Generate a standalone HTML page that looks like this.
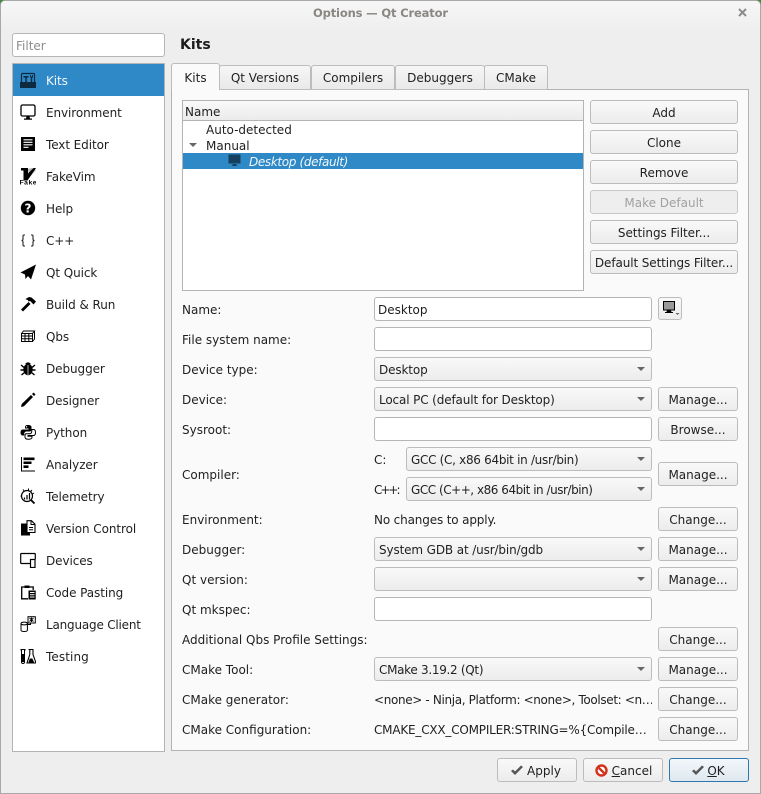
<!DOCTYPE html>
<html><head><meta charset="utf-8"><title>Options — Qt Creator</title>
<style>
html,body{margin:0;padding:0;background:#3a8a3a;}
body{width:761px;height:794px;overflow:hidden;position:relative;font:12px/16px "DejaVu Sans",sans-serif;color:#1f1f1f;}
#w{position:absolute;left:0;top:0;width:759px;height:792px;border:1px solid #a8a8a8;border-radius:5px 5px 0 0;background:#eeeeee;overflow:hidden;}
.a{position:absolute;white-space:nowrap;}
#root{position:absolute;left:0;top:0;width:761px;height:794px;}
.t{position:absolute;white-space:nowrap;line-height:16px;margin-top:1px;}
.b{position:absolute;box-sizing:border-box;height:24px;border:1px solid #bcbcbc;border-radius:3px;background:linear-gradient(#f9f9f9,#ececec);text-align:center;line-height:24px;white-space:nowrap;}
.i{position:absolute;box-sizing:border-box;height:24px;border:1px solid #b6b6b6;border-radius:3px;background:#fff;line-height:24px;padding-left:3px;white-space:nowrap;}
.c{position:absolute;box-sizing:border-box;height:24px;border:1px solid #bcbcbc;border-radius:3px;background:linear-gradient(#f9f9f9,#ececec);line-height:24px;padding-left:4px;white-space:nowrap;letter-spacing:-.13px;}
.c:after{content:"";position:absolute;right:6px;top:9px;border-left:4px solid transparent;border-right:4px solid transparent;border-top:4px solid #666;}
.tab{position:absolute;box-sizing:border-box;top:65px;height:25px;border:1px solid #bcbcbc;border-radius:3px 3px 0 0;background:linear-gradient(#f6f6f6,#e9e9e9);text-align:center;line-height:25px;white-space:nowrap;}
.s{position:absolute;left:20px;width:16px;height:16px;}
.n{position:absolute;left:46px;white-space:nowrap;line-height:16px;margin-top:1px;letter-spacing:-.08px;}
</style></head><body>
<div id="w"></div>
<div id="root">
<div style="position:absolute;left:1px;top:1px;width:759px;height:30px;background:linear-gradient(#f7f7f7,#eeeeee);border-radius:4px 4px 0 0"></div>
<div class="t" style="left:313px;top:4px;color:#8a8682;font-weight:bold;font-size:11.5px;letter-spacing:-.15px">Options — Qt Creator</div>
<svg class="a" style="left:738px;top:8px" width="9" height="9"><path d="M1 1L8 8M8 1L1 8" stroke="#8c8c8c" stroke-width="2"/></svg>

<div class="i" style="left:12px;top:33px;width:153px;color:#8d8d8d;border-radius:3px">Filter</div>

<div style="position:absolute;box-sizing:border-box;left:12px;top:63px;width:153px;height:689px;background:#fff;border:1px solid #b4b4b4"></div>
<div style="position:absolute;left:13px;top:64px;width:151px;height:32px;background:#2e89c6"></div>
<div class="n" style="top:72px;color:#f2f7fb">Kits</div>
<div class="n" style="top:104px">Environment</div>
<div class="n" style="top:136px">Text Editor</div>
<div class="n" style="top:168px">FakeVim</div>
<div class="n" style="top:200px">Help</div>
<div class="n" style="top:232px">C++</div>
<div class="n" style="top:264px">Qt Quick</div>
<div class="n" style="top:296px">Build &amp; Run</div>
<div class="n" style="top:328px">Qbs</div>
<div class="n" style="top:360px">Debugger</div>
<div class="n" style="top:392px">Designer</div>
<div class="n" style="top:424px">Python</div>
<div class="n" style="top:456px">Analyzer</div>
<div class="n" style="top:488px">Telemetry</div>
<div class="n" style="top:520px">Version Control</div>
<div class="n" style="top:552px">Devices</div>
<div class="n" style="top:584px">Code Pasting</div>
<div class="n" style="top:616px;letter-spacing:-.2px">Language Client</div>
<div class="n" style="top:648px;letter-spacing:.1px">Testing</div>

<!-- kits -->
<svg class="s" style="top:72px" viewBox="0 0 16 16"><path d="M0 10h16v6H0z" fill="#0e2a40"/><path d="M1.500 10V2.500q0-1 1-1h11q1 0 1 1V10" fill="none" stroke="#0e2a40" stroke-width="1.200"/><path d="M3.500 4h5v1.600H6.800V10H5.300V5.600H3.500zM10 3v2.500h.8V10h1.400V5.500h.8V3h-.9v1.500h-1.200V3z" fill="#0e2a40"/></svg>
<!-- env -->
<svg class="s" style="top:104px" viewBox="0 0 16 16"><rect x="1" y="1" width="14" height="11" rx="1.500" fill="#fff" stroke="#000" stroke-width="1.300"/><path d="M6.500 12.500h3l.5 2h2v1.200H4v-1.200h2z" fill="#000"/></svg>
<!-- text editor -->
<svg class="s" style="top:136px" viewBox="0 0 16 16"><rect x="1" y="1" width="14" height="14" fill="#000"/><path d="M3.500 3.800h9M3.500 6.300h9M3.500 8.800h9M3.500 11.300h5" stroke="#fff" stroke-width="1.200"/></svg>
<!-- fakevim -->
<svg class="s" style="top:168px;height:17px" viewBox="0 0 16 17"><path d="M8 1l4-1 4 2-7 8z" fill="#b5b5b5"/><path d="M1 0h7v5.500L13.500 0H16L7.500 12.500H3.500V2.500H1z" fill="#000"/><text x="-.5" y="16.500" font-family="Liberation Sans" font-weight="bold" font-size="6.800" textLength="17" fill="#000">Fake</text></svg>
<!-- help -->
<svg class="s" style="top:200px" viewBox="0 0 16 16"><circle cx="8" cy="8" r="7.200" fill="#000"/><text x="8" y="12.400" text-anchor="middle" font-family="DejaVu Sans" font-weight="bold" font-size="12" fill="#fff">?</text></svg>
<!-- cpp -->
<svg class="s" style="top:232px" viewBox="0 0 16 16"><path d="M5 3H4Q3 3 3 4V7Q3 8.500 1.500 8.500 3 8.500 3 10V13Q3 14 4 14H5M11 3H12Q13 3 13 4V7Q13 8.500 14.500 8.500 13 8.500 13 10V13Q13 14 12 14H11" fill="none" stroke="#222" stroke-width="1.100"/></svg>
<!-- qt quick -->
<svg class="s" style="top:264px" viewBox="0 0 16 16"><path d="M16 .5L.5 8.500l4.500 2 .5 4.500 2.500-3 3 3.500z" fill="#000"/></svg>
<!-- hammer -->
<svg class="s" style="top:296px" viewBox="0 0 16 16"><path d="M1 13.500l2 2 7.500-7.500-2-2z" fill="#000"/><path d="M5.500 3L9 1l2.500.5 4.500 4-2.500 3-3.300-3.500-1.500.5-1-1.500-1.500-.5z" fill="#000"/></svg>
<!-- qbs -->
<svg class="s" style="top:328px" viewBox="0 0 16 16"><path d="M1.500 5.500h11v8h-11zM1.500 8h11M1.500 10.800h11M5 5.500v8M8.800 5.500v8M1.500 5.500l2-2.500h11l-2 2.500M14.500 3v8l-2 2.500" fill="none" stroke="#000" stroke-width="1"/></svg>
<!-- bug -->
<svg class="s" style="top:360px" viewBox="0 0 16 16"><ellipse cx="8" cy="9.500" rx="4.700" ry="5.700" fill="#000"/><path d="M5 4Q8 .5 11 4z" fill="#000"/><path d="M1 5l3 2.500M15 5l-3 2.500M.5 10h3M15.500 10h-3M1.500 15l3-2.500M14.500 15l-3-2.500" stroke="#000" stroke-width="1.400"/><path d="M8 5v10" stroke="#fff" stroke-width=".7"/></svg>
<!-- designer -->
<svg class="s" style="top:392px" viewBox="0 0 16 16"><path d="M1 15l.7-3L11 3l2 2-9 9.300z" fill="#000"/><path d="M12 2l1.500-1.500 2 2L14 4z" fill="#000"/></svg>
<!-- python -->
<svg class="s" style="top:424px" viewBox="0 0 16 16"><path d="M8 1C5.500 1 5 2 5 3v1.500h3.500v1H3C1.500 5.500.5 6.500.5 8.500s1 3 2.500 3h1.200V10c0-1.500 1-2.500 2.500-2.500h3c1 0 1.800-.8 1.800-1.800V3c0-1.200-1.200-2-3.500-2z" fill="#000"/><path d="M11.800 5.500V7c0 1.800-1 2.800-2.500 2.800h-3c-.8 0-1.300.5-1.300 1.300V13c0 1.500 1.500 2.300 3.500 2.300s3.500-.8 3.500-2v-1H8v-.8h5.500c1.200 0 2-1 2-3s-.8-3-2-3z" fill="#fff" stroke="#000" stroke-width="1"/><circle cx="6.500" cy="2.800" r=".7" fill="#fff"/></svg>
<!-- analyzer -->
<svg class="s" style="top:456px" viewBox="0 0 16 16"><path d="M1.500 1v14H15" fill="none" stroke="#000" stroke-width="1"/><path d="M3.500 1.500h11v2.600h-11zM3.500 5.500h8v2.500h-8zM3.500 9.400h5V12h-5z" fill="#000"/></svg>
<!-- telemetry -->
<svg class="s" style="top:488px" viewBox="0 0 16 16"><circle cx="7" cy="8" r="5.500" fill="#fff" stroke="#000" stroke-width="1.200"/><path d="M4.500 9.500v2M7 7v4.500M9.500 5v6.500" stroke="#000" stroke-width="1.200"/><path d="M11 12l3.500 3.500" stroke="#000" stroke-width="1.800"/><path d="M3 1.500l1.500 2M8.500.5v2M12 2l-1.500 1.700M.5 8h1M14 5l-1.500 1" stroke="#000" stroke-width="1"/></svg>
<!-- vc -->
<svg class="s" style="top:520px" viewBox="0 0 16 16"><path d="M1 3.500h6l3 3V15.500H1z" fill="#000"/><path d="M7 .7h4.500L15 4.200v8.300H7z" fill="#fff" stroke="#000" stroke-width="1.100"/><path d="M11 1v3.500h4" fill="none" stroke="#000"/><path d="M9 7.500h4M9 9.800h4" stroke="#000"/></svg>
<!-- devices -->
<svg class="s" style="top:552px" viewBox="0 0 16 16"><path d="M10 11.500H1.500q-.8 0-.8-.8V2.300q0-.8.8-.8h13q.8 0 .8.8v5" fill="none" stroke="#000" stroke-width="1.200"/><rect x="10.500" y="7.500" width="4.500" height="8" fill="#fff" stroke="#000" stroke-width="1.200"/></svg>
<!-- code pasting -->
<svg class="s" style="top:584px" viewBox="0 0 16 16"><path d="M8 14.800H1.700V3h11.500V6" fill="none" stroke="#000" stroke-width="1.300"/><path d="M4.500 1.500h5V4h-5z" fill="#000"/><path d="M8.500 6.500h7.200v9H8.500z" fill="#000"/><path d="M10 8.500h4.500M10 10.800h4.500M10 13h4.500" stroke="#fff" stroke-width="1"/></svg>
<!-- lang client -->
<svg class="s" style="top:616px" viewBox="0 0 16 16"><path d="M1 7.500V14q0 1.500 3.200 1.500T7.400 14V7.500" fill="#fff" stroke="#000"/><ellipse cx="4.200" cy="7.500" rx="3.200" ry="1.400" fill="#fff" stroke="#000"/><rect x="8" y=".7" width="7.300" height="6.300" fill="#fff" stroke="#000"/><path d="M9.500 5.500l4-3.500M9.500 2l4 3.500M11.500 1.500V6" stroke="#000" stroke-width="1"/><path d="M7.500 8.500h3V7" fill="none" stroke="#000"/></svg>
<!-- testing -->
<svg class="s" style="top:648px" viewBox="0 0 16 16"><path d="M.5 1h5v1.600H.5z" fill="#000"/><path d="M1.500 2v12q0 1.500 1.500 1.500T4.500 14V2" fill="#fff" stroke="#000"/><path d="M2 6h2.500v8H2z" fill="#000"/><path d="M8.500 1.500h5M9.800 1.500v5L7 15h9l-3-8.500v-5" fill="none" stroke="#000" stroke-width="1.100"/><path d="M8.300 15l1.500-4.500h2.500L14.500 15z" fill="#000"/></svg>

<div class="t" style="left:180px;top:36px;font-size:14px;font-weight:bold;color:#1c1c1c">Kits</div>

<!-- pane -->
<div style="position:absolute;box-sizing:border-box;left:171px;top:89px;width:578px;height:662px;background:#fafafa;border:1px solid #b4b4b4"></div>
<div class="tab" style="left:219px;width:92px">Qt Versions</div>
<div class="tab" style="left:311px;width:84px">Compilers</div>
<div class="tab" style="left:395px;width:90px">Debuggers</div>
<div class="tab" style="left:484px;width:64px">CMake</div>
<div style="position:absolute;box-sizing:border-box;left:171px;top:63px;width:49px;height:27px;border:1px solid #bcbcbc;border-bottom:0;border-radius:3px 3px 0 0;background:#fafafa;text-align:center;line-height:28px">Kits</div>

<!-- tree -->
<div style="position:absolute;box-sizing:border-box;left:182px;top:100px;width:402px;height:191px;background:#fff;border:1px solid #b4b4b4"></div>
<div style="position:absolute;box-sizing:border-box;left:183px;top:101px;width:400px;height:20px;background:linear-gradient(#f9f9f9,#ebebeb);border-bottom:1px solid #b4b4b4;line-height:22px;padding-left:2px">Name</div>
<div class="t" style="left:206px;top:121px">Auto-detected</div>
<div class="t" style="left:206px;top:137px">Manual</div>
<div style="position:absolute;left:189px;top:143px;border-left:4px solid transparent;border-right:4px solid transparent;border-top:4px solid #666"></div>
<div style="position:absolute;left:183px;top:153px;width:400px;height:16px;background:#2e89c6"></div>
<svg class="a" style="left:228px;top:154px" width="13" height="13" viewBox="0 0 13 13"><rect x=".5" y=".5" width="12" height="9" fill="#16405f"/><path d="M4.500 10h4v1l1 1h-6l1-1z" fill="#16405f"/></svg>
<div class="t" style="left:249px;top:153px;color:#f2f7fb;font-style:italic;letter-spacing:-.35px">Desktop (default)</div>

<!-- right buttons -->
<div class="b" style="left:590px;top:100px;width:148px">Add</div>
<div class="b" style="left:590px;top:130px;width:148px">Clone</div>
<div class="b" style="left:590px;top:160px;width:148px">Remove</div>
<div class="b" style="left:590px;top:190px;width:148px;color:#a0a0a0;background:#eeeeee;border-color:#c8c8c8">Make Default</div>
<div class="b" style="left:590px;top:220px;width:148px;letter-spacing:-.05px">Settings Filter...</div>
<div class="b" style="left:590px;top:250px;width:148px;letter-spacing:-.1px">Default Settings Filter...</div>

<!-- form -->
<div class="t" style="left:182px;top:301px">Name:</div>
<div class="i" style="left:374px;top:297px;width:278px">Desktop</div>
<div class="b" style="left:658px;top:297px;width:24px;height:23px"></div>
<svg class="a" style="left:663px;top:301px" width="18" height="16" viewBox="0 0 18 16"><rect x=".5" y=".5" width="11" height="8.500" fill="#999" stroke="#000"/><path d="M4 9.500h4l.5 1.500H10v1H2v-1h1.500z" fill="#000"/><path d="M12.500 12h4l-2 2z" fill="#666"/></svg>

<div class="t" style="left:182px;top:331px">File system name:</div>
<div class="i" style="left:374px;top:327px;width:278px"></div>

<div class="t" style="left:182px;top:361px">Device type:</div>
<div class="c" style="left:374px;top:357px;width:278px">Desktop</div>

<div class="t" style="left:182px;top:391px">Device:</div>
<div class="c" style="left:374px;top:387px;width:278px">Local PC (default for Desktop)</div>
<div class="b" style="left:658px;top:387px;width:80px">Manage...</div>

<div class="t" style="left:182px;top:421px">Sysroot:</div>
<div class="i" style="left:374px;top:417px;width:278px"></div>
<div class="b" style="left:658px;top:417px;width:80px">Browse...</div>

<div class="t" style="left:182px;top:466px">Compiler:</div>
<div class="t" style="left:374px;top:451px">C:</div>
<div class="c" style="left:406px;top:447px;width:246px;letter-spacing:-.3px">GCC (C, x86 64bit in /usr/bin)</div>
<div class="t" style="left:374px;top:481px;letter-spacing:-2px">C++:</div>
<div class="c" style="left:406px;top:477px;width:246px;letter-spacing:-.47px">GCC (C++, x86 64bit in /usr/bin)</div>
<div class="b" style="left:658px;top:462px;width:80px">Manage...</div>

<div class="t" style="left:182px;top:511px">Environment:</div>
<div class="t" style="left:374px;top:511px;letter-spacing:-.15px">No changes to apply.</div>
<div class="b" style="left:658px;top:507px;width:80px">Change...</div>

<div class="t" style="left:182px;top:541px">Debugger:</div>
<div class="c" style="left:374px;top:537px;width:278px">System GDB at /usr/bin/gdb</div>
<div class="b" style="left:658px;top:537px;width:80px">Manage...</div>

<div class="t" style="left:182px;top:571px">Qt version:</div>
<div class="c" style="left:374px;top:567px;width:278px"></div>
<div class="b" style="left:658px;top:567px;width:80px">Manage...</div>

<div class="t" style="left:182px;top:601px">Qt mkspec:</div>
<div class="i" style="left:374px;top:597px;width:278px"></div>

<div class="t" style="left:182px;top:631px">Additional Qbs Profile Settings:</div>
<div class="b" style="left:658px;top:627px;width:80px">Change...</div>

<div class="t" style="left:182px;top:661px">CMake Tool:</div>
<div class="c" style="left:374px;top:657px;width:278px;letter-spacing:-.3px">CMake 3.19.2 (Qt)</div>
<div class="b" style="left:658px;top:657px;width:80px">Manage...</div>

<div class="t" style="left:182px;top:691px">CMake generator:</div>
<div class="t" style="left:374px;top:691px;width:278px;overflow:hidden;letter-spacing:-.35px">&lt;none&gt; - Ninja, Platform: &lt;none&gt;, Toolset: &lt;n…</div>
<div class="b" style="left:658px;top:687px;width:80px">Change...</div>

<div class="t" style="left:182px;top:721px">CMake Configuration:</div>
<div class="t" style="left:374px;top:721px;width:278px;overflow:hidden;letter-spacing:-.2px">CMAKE_CXX_COMPILER:STRING=%{Compile…</div>
<div class="b" style="left:658px;top:717px;width:80px">Change...</div>

<!-- bottom -->
<div class="b" style="left:497px;top:758px;width:80px;padding-left:14px">Apply</div>
<svg class="a" style="left:510px;top:765px" width="14" height="11" viewBox="0 0 14 11"><path d="M1 6l4 4 8-8-2-1.500-6 6-2-2z" fill="#555"/></svg>
<div class="b" style="left:583px;top:758px;width:80px;padding-left:18px"><u>C</u>ancel</div>
<svg class="a" style="left:595px;top:764px" width="13" height="13" viewBox="0 0 13 13"><circle cx="6.500" cy="6.500" r="5" fill="#fff" stroke="#d2321e" stroke-width="2.400"/><path d="M3 3l7 7" stroke="#d2321e" stroke-width="2.400"/></svg>
<div class="b" style="left:669px;top:758px;width:80px;padding-left:14px;border-color:#2e78ad;background:linear-gradient(#f2f7fb,#dfe8f0)"><u>O</u>K</div>
<svg class="a" style="left:691px;top:765px" width="14" height="11" viewBox="0 0 14 11"><path d="M1 6l4 4 8-8-2-1.500-6 6-2-2z" fill="#555"/></svg>
</div>
</body></html>
